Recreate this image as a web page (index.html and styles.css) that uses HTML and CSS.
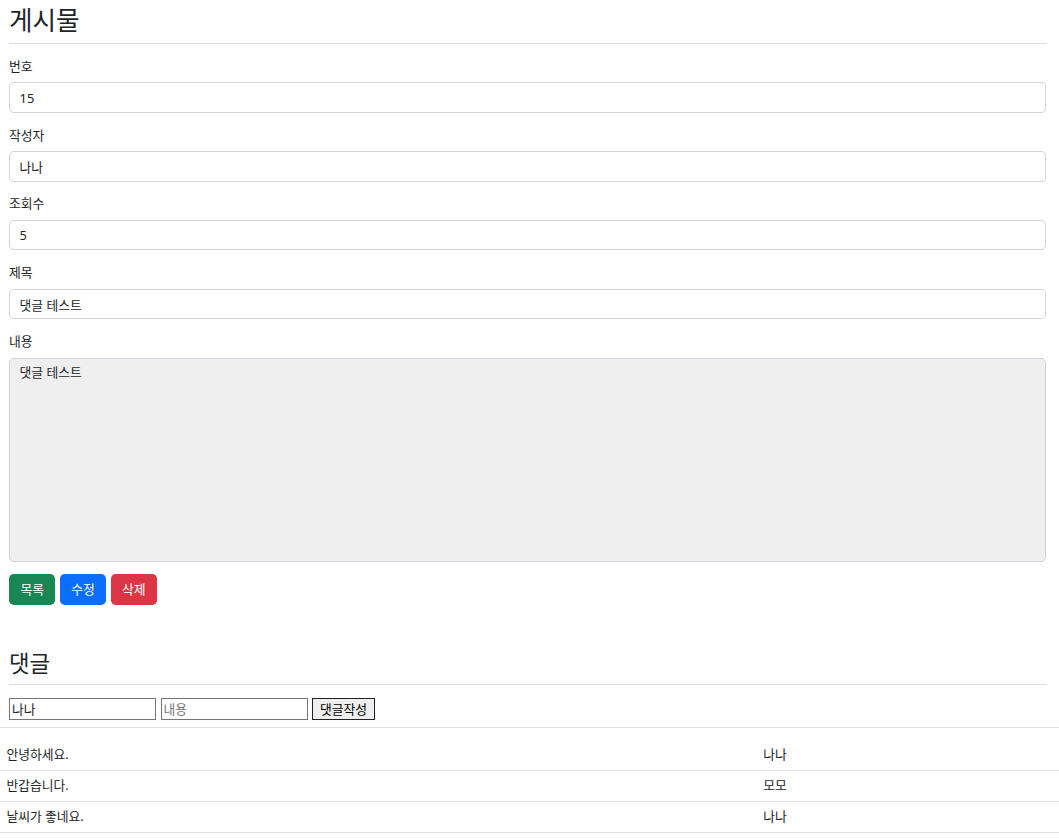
FILE: index.html
```html
<!DOCTYPE html>
<html lang="ko">
<head>
  <meta charset="UTF-8">
  <meta name="viewport" content="width=device-width, initial-scale=1.0">
  <title>게시물</title>
  <link rel="stylesheet" href="styles.css">
</head>
<body>
  <div class="board">
    <h2 class="board-title">게시물</h2>
    <hr class="divider">
    <form class="board-form">
      <div class="field">
        <label class="field-label">번호</label>
        <input class="field-input" type="text" value="15" readonly>
      </div>
      <div class="field">
        <label class="field-label">작성자</label>
        <input class="field-input" type="text" value="나나" readonly>
      </div>
      <div class="field">
        <label class="field-label">조회수</label>
        <input class="field-input" type="text" value="5" readonly>
      </div>
      <div class="field">
        <label class="field-label">제목</label>
        <input class="field-input" type="text" value="댓글 테스트" readonly>
      </div>
      <div class="field">
        <label class="field-label">내용</label>
        <textarea class="field-input field-content" readonly>댓글 테스트</textarea>
      </div>
      <div class="actions">
        <button type="button" class="btn btn-list">목록</button>
        <button type="button" class="btn btn-edit">수정</button>
        <button type="button" class="btn btn-delete">삭제</button>
      </div>
    </form>

    <h3 class="reply-title">댓글</h3>
    <hr class="divider">
    <div class="reply-form">
      <input class="reply-input" type="text" value="나나">
      <input class="reply-input" type="text" placeholder="내용">
      <button type="button" class="reply-button">댓글작성</button>
    </div>
  </div>
  <hr class="full-line">
  <table class="reply-table">
    <tbody>
      <tr><td class="reply-text">안녕하세요.</td><td>나나</td></tr>
      <tr><td class="reply-text">반갑습니다.</td><td>모모</td></tr>
      <tr><td class="reply-text">날씨가 좋네요.</td><td>나나</td></tr>
    </tbody>
  </table>
</body>
</html>
```

FILE: styles.css
```css
:root {
  --text-color: #212529;
  --border-color: #ced4da;
  --line-color: #dee2e6;
}
body {
  margin: 0;
  padding: 0;
  background-color: #fff;
  color: var(--text-color);
  font-family: "Noto Sans", "Noto Sans CJK KR", sans-serif;
  font-size: 12.8px;
  line-height: 19.2px;
}
.board {
  padding: 6px 13px 0 9px;
}
.board-title {
  margin: 0 0 6.4px;
  font-size: 25.6px;
  font-weight: 400;
  line-height: 30.7px;
}
.divider {
  margin: 6.4px 0 12.8px;
  border: 0;
  border-top: 1px solid #dadcde;
}
.board-form {
  margin: 0;
}
.field {
  display: flex;
  flex-direction: column;
  margin-bottom: 12.8px;
}
.field-label {
  margin-bottom: 6.4px;
}
.field-input {
  box-sizing: border-box;
  height: 30.4px;
  padding: 4.8px 9.6px;
  border: 1px solid var(--border-color);
  border-radius: 4.8px;
  background-color: #fff;
  color: var(--text-color);
  font-family: inherit;
  font-size: 12.8px;
  line-height: 19.2px;
  outline: none;
}
.field-content {
  height: 204px;
  resize: none;
  background-color: #efefef;
}
.actions {
  display: flex;
  gap: 4.5px;
}
.btn {
  box-sizing: border-box;
  height: 30.4px;
  padding: 4.8px 10.4px;
  border: 1px solid transparent;
  border-radius: 4.8px;
  color: #fff;
  font-family: inherit;
  font-size: 12.8px;
  line-height: 19.2px;
  cursor: pointer;
}
.btn-list {
  background-color: #198754;
}
.btn-edit {
  background-color: #0d6efd;
}
.btn-delete {
  background-color: #dc3545;
}
.reply-title {
  margin: 46px 0 6.4px;
  font-size: 22.4px;
  font-weight: 400;
  line-height: 26.9px;
}
.reply-form {
  display: flex;
  gap: 4.5px;
  margin-bottom: 7px;
}
.reply-input {
  box-sizing: border-box;
  width: 147px;
  height: 22px;
  padding: 1px 2px;
  border: 1px solid #767676;
  border-radius: 0;
  color: var(--text-color);
  font-family: inherit;
  font-size: 12.8px;
  line-height: 18px;
  outline: none;
}
.reply-input::placeholder {
  color: #757575;
}
.reply-button {
  box-sizing: border-box;
  width: 63px;
  height: 22px;
  padding: 0 4px;
  border: 1px solid #222;
  background-color: #efefef;
  color: #000;
  font-family: inherit;
  font-size: 12.8px;
  line-height: 18px;
}
.full-line {
  margin: 0 0 12px;
  border: 0;
  border-top: 1px solid var(--line-color);
}
.reply-table {
  width: 100%;
  border-collapse: collapse;
}
.reply-table td {
  padding: 5.4px 6.4px;
  border-bottom: 1px solid var(--line-color);
  line-height: 19.2px;
}
.reply-table .reply-text {
  width: 744px;
}
```
